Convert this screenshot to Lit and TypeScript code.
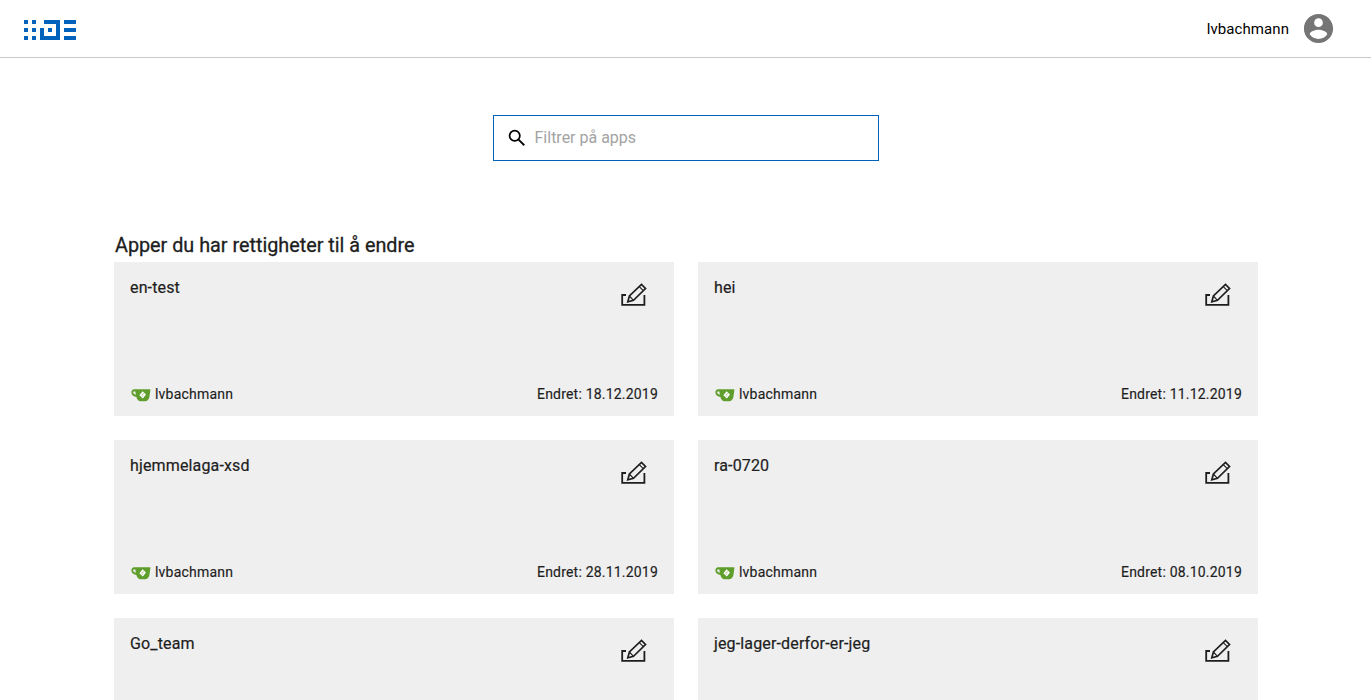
import { LitElement, html, css, svg } from "lit";
import { customElement } from "lit/decorators.js";

const apps = [
  { name: "en-test", date: "18.12.2019" },
  { name: "hei", date: "11.12.2019" },
  { name: "hjemmelaga-xsd", date: "28.11.2019" },
  { name: "ra-0720", date: "08.10.2019" },
  { name: "Go_team", date: "05.10.2019" },
  { name: "jeg-lager-derfor-er-jeg", date: "01.10.2019" },
];

const logo = html`<svg class="logo" width="52" height="20" viewBox="0 0 52 20" fill="#0062ba">
  <rect x="0" y="0" width="4" height="4"/><rect x="8" y="0" width="4" height="4"/>
  <rect x="0" y="8" width="4" height="4"/><rect x="8" y="8" width="4" height="4"/>
  <rect x="0" y="16" width="4" height="4"/><rect x="8" y="16" width="4" height="4"/>
  <path d="M20 0h16v20H16V8h4v8h12V4H20z"/>
  <rect x="24" y="8" width="4" height="4"/>
  <rect x="40" y="0" width="12" height="4"/><rect x="40" y="8" width="12" height="4"/><rect x="40" y="16" width="12" height="4"/>
</svg>`;

const editIcon = html`<svg class="edit" width="26" height="24" viewBox="0 0 26 24" fill="none" stroke="#1e1e1e" stroke-width="1.800">
  <path d="M5 12H1.200v9.800h22.200V12"/>
  <path d="M6.800 18.800l1.600-5.800L20.500 1.500l4 4L12.500 17.300z" stroke-width="1.700"/>
  <path d="M8.400 13l4.100 4.300M18.300 3.700l4 4" stroke-width="1.100"/>
</svg>`;

const cup = svg`<path d="M5 2.200h13.800c.5 0 .7.300.6.800l-1 7c-.5 2.600-2.200 4.200-4.200 4.200H9.600C7.400 14.200 6 12.600 5.400 10 3 9.800.6 8.500.4 5.800.2 3.400 1.600 2.200 3 2.200zM2.600 4.400c-.4 0-.6.300-.5.900.3 1.500 1.500 2.200 2.700 2.400L4.400 4.400z" fill="#5f9e2c" fill-rule="evenodd"/>
<path d="M11.600 4.300l3.400 3.300-3.200 3.800-3.400-3.200z" fill="#fff"/>
<path d="M10.400 8.200l2.400-1.800M11.200 9.400l1.200-1" stroke="#8fbb6a" stroke-width=".8" fill="none"/>`;

@customElement("app-root")
export class AppRoot extends LitElement {
  static styles = css`
    :host {
      display: block;
      height: 100vh;
      overflow: hidden;
      background: #fff;
      font-family: Roboto, "Liberation Sans", sans-serif;
      color: #1e1e1e;
    }
    header {
      height: 57px;
      border-bottom: 1px solid #c9c9c9;
      display: flex;
      align-items: center;
      justify-content: space-between;
      padding: 0 35px 0 24px;
    }
    .logo { display: block; margin-top: 2px; }
    .user {
      display: flex;
      align-items: center;
      gap: 12px;
      font-size: 15px;
      letter-spacing: 0.08px;
      color: #000;
    }
    .user svg { display: block; margin-top: -1px; }
    main { padding: 57px 113px 0 114px; }
    .search-wrap { display: flex; justify-content: center; padding-right: 1px; }
    .search {
      width: 386px;
      height: 46px;
      box-sizing: border-box;
      border: 1px solid #0062ba;
      display: flex;
      align-items: center;
      padding-left: 12px;
      gap: 7px;
    }
    .search svg { display: block; flex: none; }
    .search input {
      flex: 1;
      min-width: 0;
      border: 0;
      outline: 0;
      padding: 0 0 2px;
      background: transparent;
      font: 400 16px Roboto, sans-serif;
      color: #000;
    }
    .search input::placeholder { color: #a3a3a3; opacity: 1; }
    h2 {
      margin: 71px 0 0;
      padding-left: 1px;
      font-size: 19.800px;
      font-weight: 400;
      line-height: 28px;
      height: 30px;
      color: #1e1e1e;
      -webkit-text-stroke: 0.3px #1e1e1e;
    }
    .grid {
      display: grid;
      grid-template-columns: 560px 560px;
      column-gap: 24px;
      row-gap: 24px;
    }
    .card {
      height: 154px;
      box-sizing: border-box;
      background: #efefef;
      padding: 17px 16px 14px;
      display: flex;
      flex-direction: column;
      justify-content: space-between;
    }
    .top { display: flex; justify-content: space-between; align-items: flex-start; }
    .title { font-size: 16px; font-weight: 400; line-height: 18px; letter-spacing: 0.15px; -webkit-text-stroke: 0.2px #1e1e1e; }
    .edit { display: block; margin: 4px 11px 0 0; }
    .bottom {
      display: flex;
      justify-content: space-between;
      align-items: center;
      font-size: 14px;
      line-height: 16px;
      letter-spacing: 0.2px;
      -webkit-text-stroke: 0.15px #1e1e1e;
    }
    .owner { display: flex; align-items: center; gap: 4px; }
    .owner svg { display: block; margin: 2px 0 0 1px; }
  `;

  render() {
    return html`
      <header>
        ${logo}
        <div class="user">
          <span>lvbachmann</span>
          <svg width="35" height="35" viewBox="0 0 24 24" fill="#757575"><path d="M12 2C6.480 2 2 6.480 2 12s4.480 10 10 10 10-4.480 10-10S17.520 2 12 2zm0 3c1.660 0 3 1.340 3 3s-1.340 3-3 3-3-1.340-3-3 1.340-3 3-3zm0 14.200c-2.500 0-4.710-1.280-6-3.220.03-1.990 4-3.080 6-3.080 1.990 0 5.970 1.090 6 3.080-1.290 1.940-3.500 3.220-6 3.220z"/></svg>
        </div>
      </header>
      <main>
        <div class="search-wrap">
          <div class="search">
            <svg width="22" height="22" viewBox="0 0 24 24" fill="none" stroke="#000"><circle cx="9.500" cy="9.500" r="5.600" stroke-width="1.900"/><path d="M13.700 13.700l6.200 6.200" stroke-width="2"/></svg>
            <input type="text" placeholder="Filtrer på apps" />
          </div>
        </div>
        <h2>Apper du har rettigheter til å endre</h2>
        <div class="grid">
          ${apps.map(
            (a) => html`<div class="card">
              <div class="top">
                <div class="title">${a.name}</div>
                ${editIcon}
              </div>
              <div class="bottom">
                <div class="owner">
                  <svg width="20" height="15" viewBox="0 0 20 15">${cup}</svg>
                  <span>lvbachmann</span>
                </div>
                <div>Endret: ${a.date}</div>
              </div>
            </div>`
          )}
        </div>
      </main>
    `;
  }
}
